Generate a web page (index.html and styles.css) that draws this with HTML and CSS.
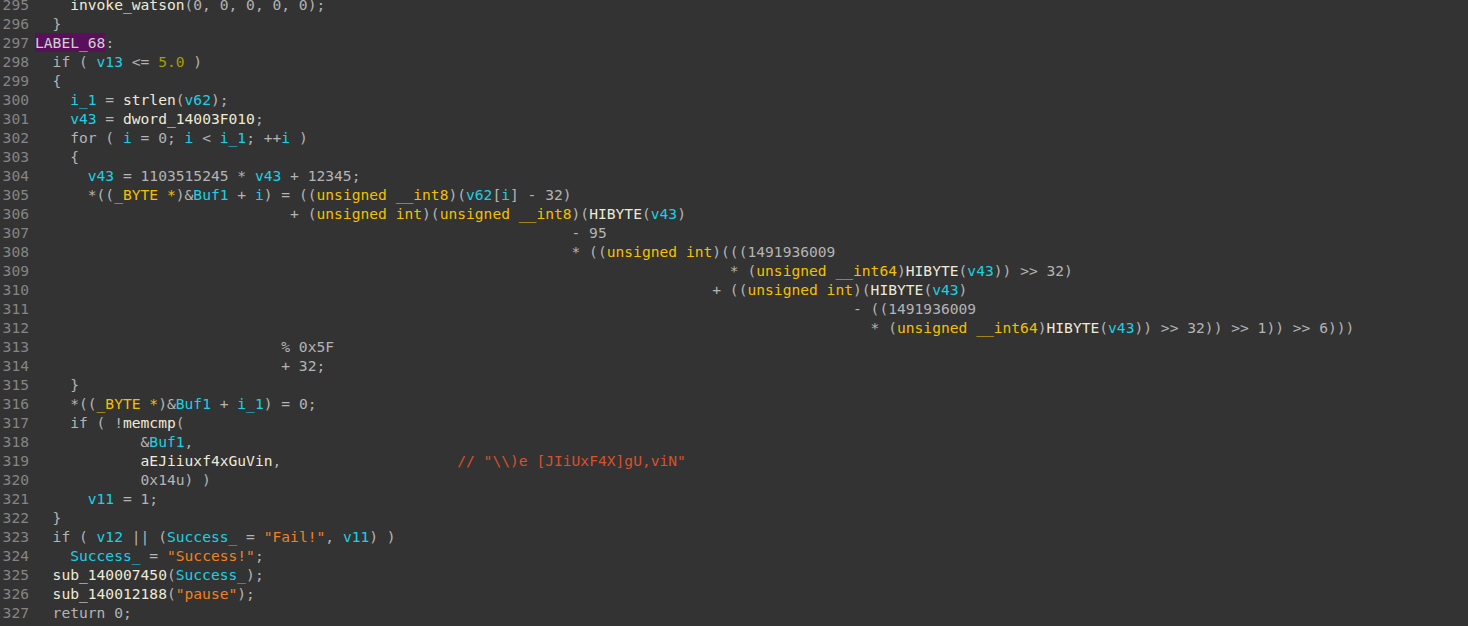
FILE: index.html
```html
<!DOCTYPE html>
<html>
<head>
<meta charset="utf-8">
<link rel="stylesheet" href="styles.css">
</head>
<body>
<div class="view">
<div class="line"><span class="ln">295</span><span class="code">    <span class="f">invoke_watson</span>(0, 0, 0, 0, 0);</span></div>
<div class="line"><span class="ln">296</span><span class="code">  }</span></div>
<div class="line"><span class="ln">297</span><span class="code"><span class="lbl">LABEL_68</span>:</span></div>
<div class="line"><span class="ln">298</span><span class="code">  if ( <span class="v">v13</span> &lt;= <span class="n">5.0</span> )</span></div>
<div class="line"><span class="ln">299</span><span class="code">  {</span></div>
<div class="line"><span class="ln">300</span><span class="code">    <span class="v">i_1</span> = <span class="f">strlen</span>(<span class="v">v62</span>);</span></div>
<div class="line"><span class="ln">301</span><span class="code">    <span class="v">v43</span> = <span class="f">dword_14003F010</span>;</span></div>
<div class="line"><span class="ln">302</span><span class="code">    for ( <span class="v">i</span> = 0; <span class="v">i</span> &lt; <span class="v">i_1</span>; ++<span class="v">i</span> )</span></div>
<div class="line"><span class="ln">303</span><span class="code">    {</span></div>
<div class="line"><span class="ln">304</span><span class="code">      <span class="v">v43</span> = 1103515245 * <span class="v">v43</span> + 12345;</span></div>
<div class="line"><span class="ln">305</span><span class="code">      *((<span class="t">_BYTE *</span>)&amp;<span class="v">Buf1</span> + <span class="v">i</span>) = ((<span class="t">unsigned __int8</span>)(<span class="v">v62</span>[<span class="v">i</span>] - 32)</span></div>
<div class="line"><span class="ln">306</span><span class="code">                             + (<span class="t">unsigned int</span>)(<span class="t">unsigned __int8</span>)(<span class="f">HIBYTE</span>(<span class="v">v43</span>)</span></div>
<div class="line"><span class="ln">307</span><span class="code">                                                             - 95</span></div>
<div class="line"><span class="ln">308</span><span class="code">                                                             * ((<span class="t">unsigned int</span>)(((1491936009</span></div>
<div class="line"><span class="ln">309</span><span class="code">                                                                               * (<span class="t">unsigned __int64</span>)<span class="f">HIBYTE</span>(<span class="v">v43</span>)) &gt;&gt; 32)</span></div>
<div class="line"><span class="ln">310</span><span class="code">                                                                             + ((<span class="t">unsigned int</span>)(<span class="f">HIBYTE</span>(<span class="v">v43</span>)</span></div>
<div class="line"><span class="ln">311</span><span class="code">                                                                                             - ((1491936009</span></div>
<div class="line"><span class="ln">312</span><span class="code">                                                                                               * (<span class="t">unsigned __int64</span>)<span class="f">HIBYTE</span>(<span class="v">v43</span>)) &gt;&gt; 32)) &gt;&gt; 1)) &gt;&gt; 6)))</span></div>
<div class="line"><span class="ln">313</span><span class="code">                            % 0x5F</span></div>
<div class="line"><span class="ln">314</span><span class="code">                            + 32;</span></div>
<div class="line"><span class="ln">315</span><span class="code">    }</span></div>
<div class="line"><span class="ln">316</span><span class="code">    *((<span class="t">_BYTE *</span>)&amp;<span class="v">Buf1</span> + <span class="v">i_1</span>) = 0;</span></div>
<div class="line"><span class="ln">317</span><span class="code">    if ( !<span class="f">memcmp</span>(</span></div>
<div class="line"><span class="ln">318</span><span class="code">            &amp;<span class="v">Buf1</span>,</span></div>
<div class="line"><span class="ln">319</span><span class="code">            <span class="f">aEJiiuxf4xGuVin</span>,                    <span class="c">// "\\)e [JIiUxF4X]gU,viN"</span></span></div>
<div class="line"><span class="ln">320</span><span class="code">            0x14u) )</span></div>
<div class="line"><span class="ln">321</span><span class="code">      <span class="v">v11</span> = 1;</span></div>
<div class="line"><span class="ln">322</span><span class="code">  }</span></div>
<div class="line"><span class="ln">323</span><span class="code">  if ( <span class="v">v12</span> || (<span class="v">Success_</span> = <span class="s">"Fail!"</span>, <span class="v">v11</span>) )</span></div>
<div class="line"><span class="ln">324</span><span class="code">    <span class="v">Success_</span> = <span class="s">"Success!"</span>;</span></div>
<div class="line"><span class="ln">325</span><span class="code">  <span class="f">sub_140007450</span>(<span class="v">Success_</span>);</span></div>
<div class="line"><span class="ln">326</span><span class="code">  <span class="f">sub_140012188</span>(<span class="s">"pause"</span>);</span></div>
<div class="line"><span class="ln">327</span><span class="code">  return 0;</span></div>
</div>
</body>
</html>
```
FILE: styles.css
```css
html, body {
  margin: 0;
  padding: 0;
  background: #333333;
  overflow: hidden;
}
.view {
  margin-top: -5px;
  font-family: "DejaVu Sans Mono", "Liberation Mono", monospace;
  font-size: 14.62px;
  color: #b4b4b4;
}
.line {
  display: flex;
  height: 19px;
  line-height: 19px;
  white-space: pre;
}
.ln {
  width: 27px;
  padding-left: 2px;
  margin-right: 6px;
  color: #858585;
  text-align: right;
  flex: none;
}
.code {
  flex: none;
}
.f { color: #eeead6; }
.v { color: #1cd0e4; }
.t { color: #f2c000; }
.n { color: #a4a000; }
.s { color: #f08020; }
.c { color: #d9502c; }
.lbl {
  background: #5a0f5a;
  color: #cfcfcf;
  display: inline-block;
  height: 19px;
}
```
